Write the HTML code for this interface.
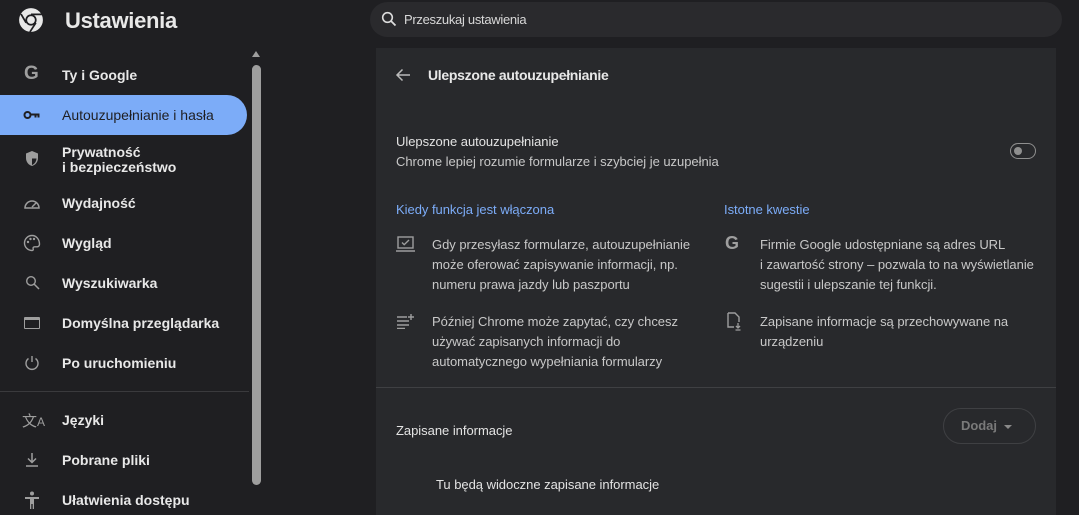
<!DOCTYPE html>
<html><head><meta charset="utf-8"><style>
*{margin:0;padding:0;box-sizing:border-box}
body{width:1079px;height:515px;background:#1f1f22;font-family:"Liberation Sans",sans-serif;color:#e3e3e3;position:relative;overflow:hidden}
.a{position:absolute;white-space:nowrap}
.nav{font-weight:bold;font-size:14px;color:#e8e8e8}
.ic{position:absolute;left:22px}
.c{font-size:13px;letter-spacing:-0.03px;color:#c8c8c8;line-height:20px}
.blue{color:#7cacf8}
</style></head><body>
<svg class="a" style="left:18px;top:7px" width="26" height="26" viewBox="0 0 24 24"><circle cx="12" cy="12" r="11" fill="#e8e8e8"/><circle cx="12" cy="12" r="5.2" fill="#1f1f22"/><circle cx="12" cy="12" r="3.6" fill="#e8e8e8"/><path d="M12 6.8 L22 6.8 M7.5 14.6 L2.8 6.5 M16.5 14.6 L11 23" stroke="#1f1f22" stroke-width="1.6"/></svg>
<div class="a" style="left:65px;top:8px;font-size:22px;font-weight:bold;color:#e8e8e8;letter-spacing:-0.3px">Ustawienia</div>
<div class="a" style="left:370px;top:2px;width:692px;height:35px;border-radius:18px;background:#2a2a2d"></div>
<svg class="a" style="left:381px;top:11px" width="16" height="16" viewBox="0 0 16 16"><circle cx="6.5" cy="6.5" r="4.8" stroke="#ddd" stroke-width="1.6" fill="none"/><path d="M10 10l4.5 4.5" stroke="#ddd" stroke-width="1.8"/></svg>
<div class="a c" style="left:404px;top:10px;color:#d8d8d8;letter-spacing:-0.3px">Przeszukaj ustawienia</div>
<div class="a" style="left:0;top:95px;width:247px;height:40px;background:#7cacf8;border-radius:0 20px 20px 0"></div>
<div class="a" style="left:250px;top:48px;width:13px;height:467px;background:#1f1f22"></div>
<div class="a" style="left:252px;top:65px;width:9px;height:420px;background:#9e9e9e;border-radius:5px"></div>
<div class="a" style="left:252px;top:51px;width:0;height:0;border-left:4.5px solid transparent;border-right:4.5px solid transparent;border-bottom:6px solid #9e9e9e"></div>
<div class="a" style="left:0;top:391px;width:249px;height:1px;background:#3a3a3d"></div>
<div class="a ic" style="left:24px;top:63px;font-size:19px;font-weight:bold;color:#9e9e9e">G</div>
<div class="a nav" style="left:62px;top:67px">Ty i Google</div>
<svg class="a" style="left:23px;top:109px" width="18" height="12" viewBox="0 0 18 12"><circle cx="4.5" cy="6" r="3" stroke="#1f1f22" stroke-width="2" fill="none"/><path d="M7.5 4.5h9v4h-2v-2h-1v2h-2v-2H7.5z" fill="#1f1f22"/></svg>
<div class="a nav" style="left:62px;top:107px;color:#1f1f22;font-weight:normal">Autouzupełnianie i hasła</div>
<svg class="a" style="left:25px;top:150px" width="14" height="17" viewBox="0 0 14 17"><path d="M7 1L1 3.5v4.5c0 4 2.6 7 6 8 3.4-1 6-4 6-8V3.5z" fill="#9e9e9e"/><path d="M7 2.5v12.5c2.6-.9 4.5-3.5 4.5-7V8.5H7z" fill="#1f1f22"/></svg>
<div class="a nav" style="left:62px;top:145px;line-height:15px">Prywatność<br>i bezpieczeństwo</div>
<svg class="a" style="left:23px;top:196px" width="18" height="14" viewBox="0 0 18 14"><path d="M2 12 A7 7 0 1 1 16 12 Z" stroke="#9e9e9e" stroke-width="1.5" fill="none"/><path d="M9 11l4-4" stroke="#9e9e9e" stroke-width="1.5"/></svg>
<div class="a nav" style="left:62px;top:195px">Wydajność</div>
<svg class="a" style="left:23px;top:234px" width="18" height="18" viewBox="0 0 18 18"><path d="M9 1.5a7.5 7.5 0 0 0 0 15c1 0 1.5-.7 1.2-1.5-.5-1.2.2-2.2 1.5-2.2H14a2.5 2.5 0 0 0 2.5-2.5C16.5 5 13 1.5 9 1.5z" stroke="#9e9e9e" stroke-width="1.4" fill="none"/><circle cx="5" cy="8" r="1.2" fill="#9e9e9e"/><circle cx="7.5" cy="5" r="1.2" fill="#9e9e9e"/><circle cx="11" cy="5" r="1.2" fill="#9e9e9e"/></svg>
<div class="a nav" style="left:62px;top:235px">Wygląd</div>
<svg class="a" style="left:25px;top:275px" width="15" height="15" viewBox="0 0 15 15"><circle cx="6" cy="6" r="4.3" stroke="#9e9e9e" stroke-width="1.4" fill="none"/><path d="M9 9l5 5" stroke="#9e9e9e" stroke-width="1.5"/></svg>
<div class="a nav" style="left:62px;top:275px">Wyszukiwarka</div>
<div class="a" style="left:24px;top:317px;width:16px;height:12px;border:1.5px solid #9e9e9e;border-top-width:3px;border-radius:1px"></div>
<div class="a nav" style="left:62px;top:315px">Domyślna przeglądarka</div>
<svg class="a" style="left:24px;top:355px" width="16" height="16" viewBox="0 0 16 16"><path d="M8 1v6M4.5 3.5a6 6 0 1 0 7 0" stroke="#9e9e9e" stroke-width="1.4" fill="none"/></svg>
<div class="a nav" style="left:62px;top:355px">Po uruchomieniu</div>
<div class="a" style="left:22px;top:410px;font-size:15px;color:#9e9e9e">文<span style="font-size:12px">A</span></div>
<div class="a nav" style="left:62px;top:412px">Języki</div>
<svg class="a" style="left:25px;top:452px" width="14" height="16" viewBox="0 0 14 16"><path d="M7 1v9M3 6.5l4 4 4-4M1 14h12" stroke="#9e9e9e" stroke-width="1.5" fill="none"/></svg>
<div class="a nav" style="left:62px;top:452px">Pobrane pliki</div>
<svg class="a" style="left:24px;top:491px" width="16" height="18" viewBox="0 0 16 18"><circle cx="8" cy="2.5" r="2" fill="#9e9e9e"/><path d="M1 6h14v2H10v10H8.7v-5H7.3v5H6V8H1z" fill="#9e9e9e"/></svg>
<div class="a nav" style="left:62px;top:492px">Ułatwienia dostępu</div>
<div class="a" style="left:376px;top:48px;width:680px;height:467px;background:#28292c"></div>
<div class="a" style="left:376px;top:387px;width:680px;height:1px;background:#3f4043"></div>
<svg class="a" style="left:395px;top:67px" width="16" height="16" viewBox="0 0 16 16"><path d="M15 8H2M7.5 2.5 2 8l5.5 5.5" stroke="#bbb" stroke-width="1.5" fill="none"/></svg>
<div class="a" style="left:428px;top:67px;font-size:14px;font-weight:bold;color:#e8e8e8;letter-spacing:-0.3px">Ulepszone autouzupełnianie</div>
<div class="a c" style="left:396px;top:132px;color:#e3e3e3">Ulepszone autouzupełnianie</div>
<div class="a c" style="left:396px;top:152px">Chrome lepiej rozumie formularze i szybciej je uzupełnia</div>
<div class="a" style="left:1010px;top:143px;width:26px;height:16px;border:1.5px solid #8f8f8f;border-radius:8px"></div>
<div class="a" style="left:1014px;top:147px;width:8px;height:8px;border-radius:50%;background:#8f8f8f"></div>
<div class="a c blue" style="left:396px;top:200px">Kiedy funkcja jest włączona</div>
<div class="a c blue" style="left:724px;top:200px">Istotne kwestie</div>
<svg class="a" style="left:396px;top:236px" width="19" height="17" viewBox="0 0 19 17"><rect x="2" y="1" width="15" height="11" stroke="#9e9e9e" stroke-width="1.4" fill="none"/><path d="M6 6.5l2.2 2.2L13 4M0 15h19" stroke="#9e9e9e" stroke-width="1.4" fill="none"/></svg>
<div class="a c" style="left:432px;top:235px">Gdy przesyłasz formularze, autouzupełnianie<br>może oferować zapisywanie informacji, np.<br>numeru prawa jazdy lub paszportu</div>
<div class="a" style="left:725px;top:233px;font-size:18px;font-weight:bold;color:#9e9e9e">G</div>
<div class="a c" style="left:760px;top:235px">Firmie Google udostępniane są adres URL<br>i zawartość strony – pozwala to na wyświetlanie<br>sugestii i ulepszanie tej funkcji.</div>
<svg class="a" style="left:397px;top:313px" width="18" height="16" viewBox="0 0 18 16"><path d="M0 4h10M0 8h12M0 12h12M0 15.5h8M14 1v6M11 4h6" stroke="#9e9e9e" stroke-width="1.4"/></svg>
<div class="a c" style="left:432px;top:312px">Później Chrome może zapytać, czy chcesz<br>używać zapisanych informacji do<br>automatycznego wypełniania formularzy</div>
<svg class="a" style="left:727px;top:312px" width="15" height="19" viewBox="0 0 15 19"><path d="M1 1h7l4 4v5M1 1v14h6" stroke="#9e9e9e" stroke-width="1.4" fill="none"/><path d="M11 11v5M9 14l2 2 2-2M8.5 18h5" stroke="#9e9e9e" stroke-width="1.3" fill="none"/></svg>
<div class="a c" style="left:760px;top:312px">Zapisane informacje są przechowywane na<br>urządzeniu</div>
<div class="a c" style="left:396px;top:421px;color:#e3e3e3">Zapisane informacje</div>
<div class="a" style="left:943px;top:408px;width:93px;height:36px;border:1px solid #3f4043;border-radius:18px"></div>
<div class="a c" style="left:961px;top:416px;color:#7a7a7a;font-weight:bold">Dodaj</div>
<div class="a" style="left:1004px;top:425px;border-left:4px solid transparent;border-right:4px solid transparent;border-top:4px solid #8a8a8a"></div>
<div class="a c" style="left:436px;top:475px;color:#e3e3e3">Tu będą widoczne zapisane informacje</div>
</body></html>
